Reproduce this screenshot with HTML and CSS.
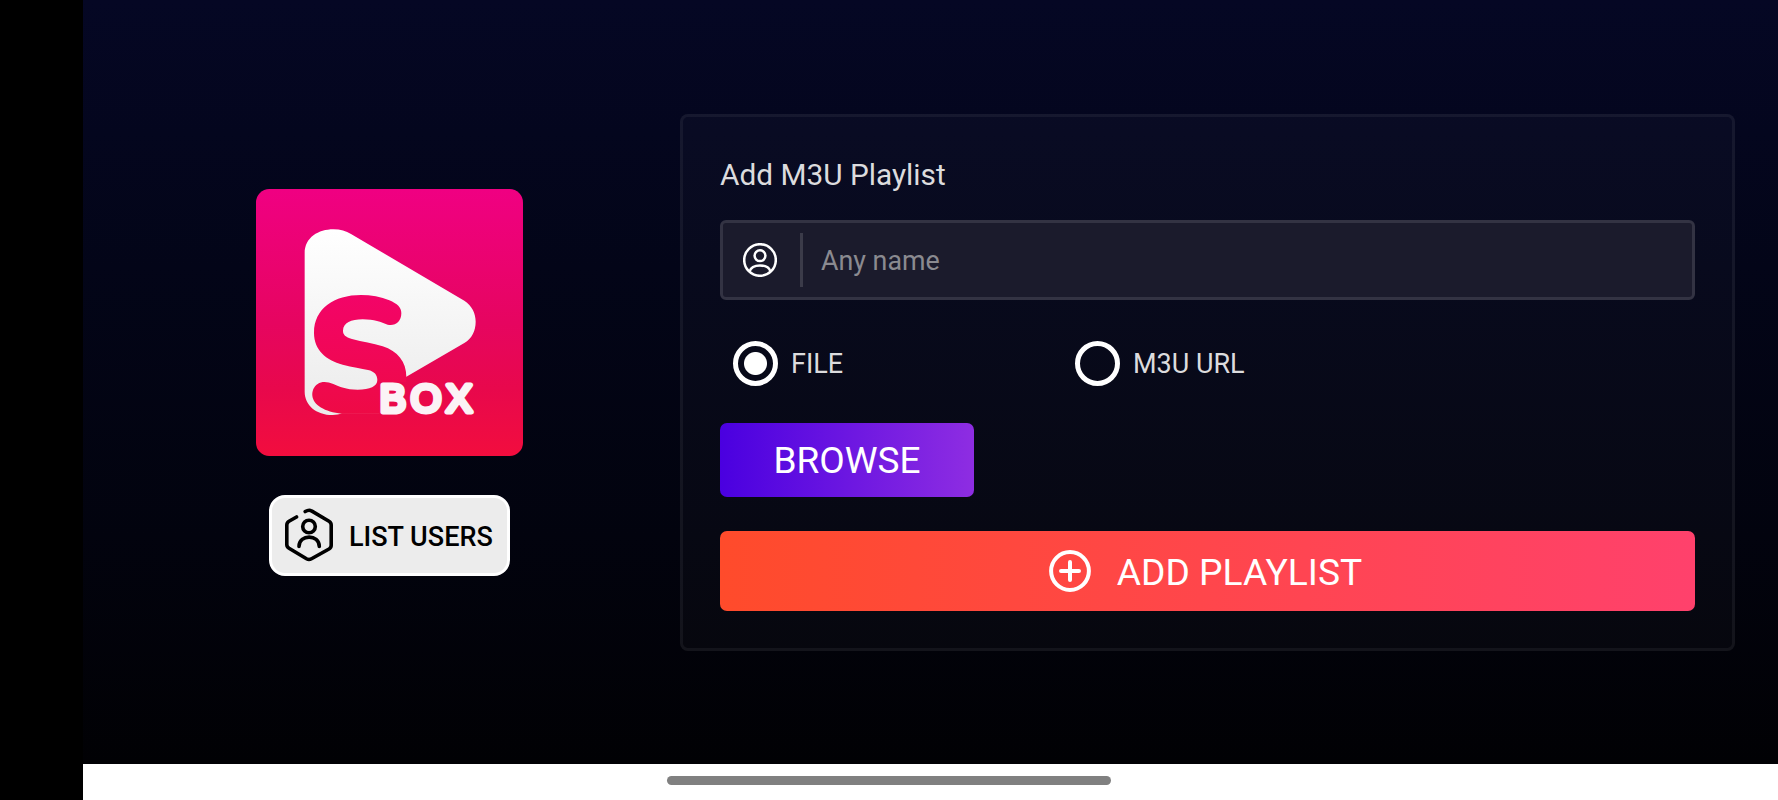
FILE: index.html
```html
<!DOCTYPE html>
<html lang="en">
<head>
  <meta charset="UTF-8" />
  <title>S Box - Add M3U Playlist</title>
  <link rel="stylesheet" href="styles.css">
</head>
<body>

  <div class="screen">
    <aside>
      <svg class="logo" viewBox="30 27 801 801">
        <defs>
          <linearGradient id="logoBg" x1="0" y1="0" x2="0" y2="1">
            <stop offset="0" stop-color="#f00082" />
            <stop offset="0.5" stop-color="#e60560" />
            <stop offset="0.75" stop-color="#e8084c" />
            <stop offset="1" stop-color="#f20d3e" />
          </linearGradient>
          <linearGradient id="play" x1="0" y1="0" x2="0" y2="1">
            <stop offset="0" stop-color="#ffffff" />
            <stop offset="1" stop-color="#ebebeb" />
          </linearGradient>
          <linearGradient id="letter" gradientUnits="userSpaceOnUse" x1="0" y1="345" x2="0" y2="705">
            <stop offset="0" stop-color="#f30468" />
            <stop offset="1" stop-color="#ee0a45" />
          </linearGradient>
        </defs>
        <rect x="30" y="27" width="801" height="801" rx="40" fill="url(#logoBg)" />
        <path fill="url(#play)" d="M176 220C176 172 218 148 262 148C284 148 300 153 315 162L655 362C678 377 689 400 689 425C689 452 678 475 655 489L481 590L400 606V700H288C280 704 270 705 260 705C210 705 176 675 176 635Z" />
        <path fill="url(#letter)" d="M481 590C481 545 455 514 410 499C380 489 350 486 318 477C298 471 291 464 291 452C292 428 315 418 350 418C385 418 405 427 425 434C446 439 466 427 466 400C466 383 454 371 430 361C405 350 375 345 345 345C265 345 204 385 204 458C204 510 240 540 290 554C320 562 346 565 366 570C385 574 394 585 394 600C394 619 372 629 335 629C300 629 280 620 262 612C245 605 228 603 215 612C203 620 198 633 199 647C202 675 235 695 288 701H402V606H480Z" />
        <text class="logo-text" x="401" y="697" textLength="278" lengthAdjust="spacing">BOX</text>
      </svg>

      <button class="list-users">
        <svg class="users-icon" viewBox="0 0 48 54">
          <path d="M11.5 9L4 13.2Q1.8 14.5 1.8 17V36.500Q1.800 39 4 40.300L21.500 50.800Q24 52.200 26.500 50.800L44 41Q46.200 39.700 46.200 37.200V17Q46.200 14.500 44 13.200L26.500 2.900Q24 1.300 20.200 3.500" />
          <circle cx="24" cy="18.500" r="6.300" />
          <path d="M14 38.500C14 26 34.300 26 34.300 38.500" />
        </svg>
        <span>LIST USERS</span>
      </button>
    </aside>

    <main>
      <h2>Add M3U Playlist</h2>

      <div class="field">
        <svg class="user-icon" viewBox="0 0 34 34">
          <circle cx="17" cy="17" r="15.800" />
          <circle cx="17" cy="12.700" r="5.400" />
          <path d="M6.500 28.500C9 20.500 25 20.500 27.500 28.500" />
        </svg>
        <input type="text" id="name" placeholder="Any name" />
      </div>

      <div class="options">
        <label><input type="radio" name="source" checked /><span>FILE</span></label>
        <label><input type="radio" name="source" /><span>M3U URL</span></label>
      </div>

      <button class="browse">BROWSE</button>

      <button class="add">
        <svg class="plus-icon" viewBox="0 0 42 42">
          <circle cx="21" cy="21" r="18.900" />
          <path d="M21 12V30M12 21H30" />
        </svg>
        <span>ADD PLAYLIST</span>
      </button>
    </main>
  </div>

  <footer>
    <div class="home-bar"></div>
  </footer>

</body>
</html>
```
FILE: styles.css
```css
/* Base */
* {
  box-sizing: border-box;
}
body {
  margin: 0;
  height: 100vh;
  padding-left: 83px;
  background: #000;
  color: #dcdcde;
  font-family: Roboto, sans-serif;
  display: flex;
  flex-direction: column;
  overflow: hidden;
}
button {
  border: none;
  padding: 0;
  font-family: inherit;
  cursor: pointer;
}
svg {
  display: block;
  flex: none;
}

.screen {
  flex: 1;
  display: flex;
  align-items: center;
  padding-right: 43px;
  background: linear-gradient(#050724, #030518 35%, #02030e 70%, #010104);
}

/* Logo side */
aside {
  width: 597px;
  padding-left: 16px;
  display: flex;
  flex-direction: column;
  align-items: center;
  gap: 39px;
}
.logo {
  width: 267px;
  height: 267px;
}
.logo-text {
  font-family: "Liberation Sans", sans-serif;
  font-size: 118px;
  fill: #fbf3f6;
  stroke: #fbf3f6;
  stroke-width: 15px;
  stroke-linejoin: round;
}
.list-users {
  width: 241px;
  height: 81px;
  padding-left: 13px;
  display: flex;
  align-items: center;
  gap: 16px;
  background: #ececec;
  border: 3px solid #fff;
  border-radius: 16px;
  color: #000;
  font-size: 27px;
  font-weight: 500;
}
.list-users span {
  padding-top: 3px;
}
.users-icon {
  width: 48px;
  height: 54px;
  fill: none;
  stroke: #000;
  stroke-width: 3.6;
  stroke-linecap: round;
}

/* Form panel */
main {
  flex: 1;
  height: 537px;
  padding: 0 37px;
  background: rgba(255, 255, 255, 0.022);
  border: 3px solid rgba(255, 255, 255, 0.055);
  border-radius: 8px;
}
main h2 {
  margin: 40px 0 27px;
  font-size: 29.8px;
  line-height: 36px;
  font-weight: 400;
}
.field {
  height: 80px;
  padding-left: 20px;
  display: flex;
  align-items: center;
  background: #1b1b2c;
  border: 3px solid #333343;
  border-radius: 6px;
}
.user-icon {
  width: 34px;
  height: 34px;
  fill: none;
  stroke: #fff;
  stroke-width: 2.5;
}
.field input {
  flex: 1;
  height: 54px;
  margin-left: 23px;
  padding: 3px 0 0 18px;
  background: none;
  border: none;
  border-left: 3px solid #3b3b49;
  outline: none;
  color: #fff;
  font-family: inherit;
  font-size: 26.8px;
}
.field input::placeholder {
  color: #8a8a90;
}

/* Radios */
.options {
  display: flex;
  margin: 41px 0 37px 13px;
}
.options label {
  width: 342px;
  height: 45px;
  display: flex;
  align-items: center;
  gap: 13px;
  font-size: 27px;
}
.options span {
  padding-top: 2px;
}
.options input {
  appearance: none;
  width: 45px;
  height: 45px;
  margin: 0;
  border: 5px solid #fff;
  border-radius: 50%;
}
.options input:checked {
  background: radial-gradient(circle, #fff 11px, transparent 12px);
}

/* Buttons */
.browse {
  display: block;
  width: 254px;
  height: 74px;
  margin-bottom: 34px;
  padding-top: 2px;
  border-radius: 7px;
  background: linear-gradient(90deg, #4a00e0, #8e2de2);
  color: #fff;
  font-size: 37px;
}
.add {
  width: 100%;
  height: 80px;
  padding-right: 4px;
  display: flex;
  align-items: center;
  justify-content: center;
  gap: 26px;
  border-radius: 7px;
  background: linear-gradient(90deg, #ff4b2b, #ff416c);
  color: #fff;
  font-size: 37.2px;
}
.add span {
  padding-top: 3px;
}
.plus-icon {
  width: 42px;
  height: 42px;
  fill: none;
  stroke: #fff;
  stroke-width: 4;
  stroke-linecap: round;
}

/* System bar */
footer {
  height: 36px;
  padding: 12px 0 0 584px;
  background: #fff;
}
.home-bar {
  width: 444px;
  height: 9px;
  border-radius: 5px;
  background: #808080;
}
```
